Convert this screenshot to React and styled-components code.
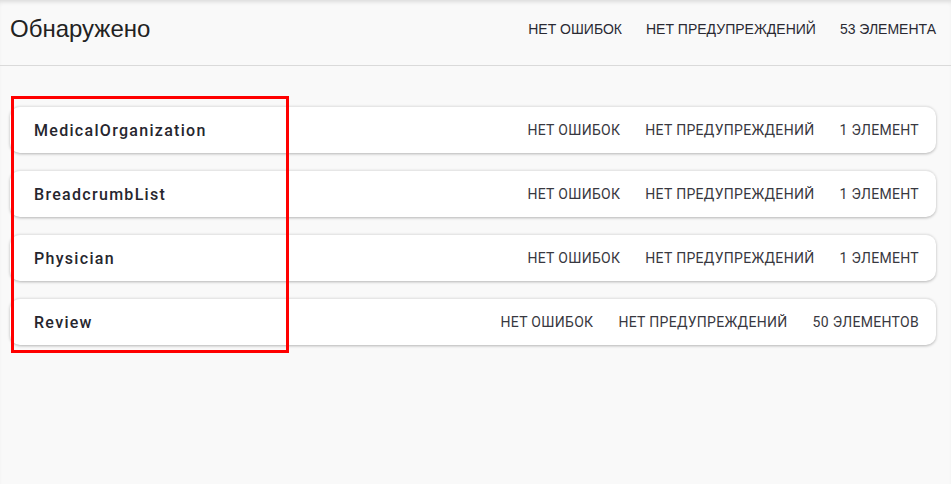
import React from "react";
import styled, { createGlobalStyle } from "styled-components";

const Global = createGlobalStyle`
  html, body {
    margin: 0;
    background: #f9f9f9;
    font-family: "Liberation Sans", Arial, sans-serif;
    color: #222;
  }
`;

const Page = styled.div`
  position: relative;
  width: 951px;
  height: 484px;
  background: #f9f9f9;
  box-shadow: inset 0 4px 4px -2px rgba(0, 0, 0, 0.12);
`;

const Header = styled.header`
  display: flex;
  align-items: center;
  justify-content: space-between;
  box-sizing: border-box;
  height: 66px;
  padding: 0 15px 7px 10px;
  border-bottom: 1px solid #dadada;
`;

const Title = styled.h1`
  margin: 0;
  font-size: 24px;
  font-weight: 400;
  color: #222;
`;

const Stats = styled.div`
  display: flex;
  gap: ${p => (p.$card ? 25 : 24)}px;
  font-family: ${p => (p.$card ? "Roboto, sans-serif" : '"Liberation Sans", Arial, sans-serif')};
  font-size: 14px;
  letter-spacing: ${p => (p.$card ? "0.3px" : "0")};
  color: ${p => (p.$card ? "#383840" : "#2a2a33")};
  text-transform: uppercase;
`;

const List = styled.div`
  display: flex;
  flex-direction: column;
  gap: 17px;
  padding: 40px 15px 0 10px;
`;

const Card = styled.div`
  display: flex;
  align-items: center;
  justify-content: space-between;
  height: 46px;
  padding: 0 17px 0 24px;
  background: #fff;
  border-radius: 10px;
  border-top: 1px solid #e6e6e6;
  box-shadow: 0 1px 3px rgba(0, 0, 0, 0.28);
`;

const Name = styled.div`
  font-family: Roboto, sans-serif;
  font-size: 16px;
  font-weight: 500;
  letter-spacing: 1.3px;
  color: #26262e;
`;

const Highlight = styled.div`
  position: absolute;
  left: 11px;
  top: 96px;
  width: 272px;
  height: 251px;
  border: 3px solid #ff0000;
  pointer-events: none;
`;

const types = [
  { name: "MedicalOrganization", count: "1 элемент" },
  { name: "BreadcrumbList", count: "1 элемент" },
  { name: "Physician", count: "1 элемент" },
  { name: "Review", count: "50 элементов" },
];

export default function App() {
  return (
    <Page>
      <Global />
      <Header>
        <Title>Обнаружено</Title>
        <Stats>
          <span>Нет ошибок</span>
          <span>Нет предупреждений</span>
          <span>53 элемента</span>
        </Stats>
      </Header>
      <List>
        {types.map(t => (
          <Card key={t.name}>
            <Name>{t.name}</Name>
            <Stats $card>
              <span>Нет ошибок</span>
              <span>Нет предупреждений</span>
              <span>{t.count}</span>
            </Stats>
          </Card>
        ))}
      </List>
      <Highlight />
    </Page>
  );
}
